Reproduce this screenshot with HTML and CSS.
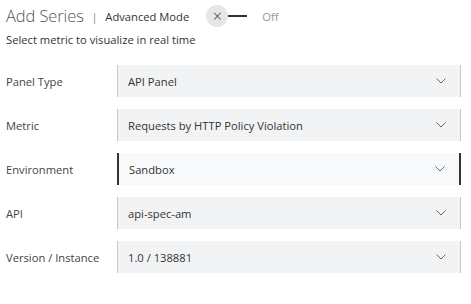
FILE: index.html
```html
<!DOCTYPE html>
<html lang="en">
<head>
  <meta charset="UTF-8">
  <title>Add Series</title>
  <link rel="stylesheet" href="styles.css">
</head>
<body>
  <div class="panel">
    <div class="header">
      <h1 class="title">Add Series</h1>
      <span class="divider">|</span>
      <span class="mode-label">Advanced Mode</span>
      <div class="toggle">
        <span class="toggle-knob">&times;</span>
        <span class="toggle-track"></span>
      </div>
      <span class="toggle-state">Off</span>
    </div>
    <p class="subtitle">Select metric to visualize in real time</p>

    <div class="form">
      <label class="field-label">Panel Type</label>
      <div class="select">
        <span class="select-value">API Panel</span>
        <svg class="chevron" viewBox="0 0 10 6"><path d="M0.5 0.5 L5 5 L9.5 0.5" /></svg>
      </div>

      <label class="field-label">Metric</label>
      <div class="select">
        <span class="select-value">Requests by HTTP Policy Violation</span>
        <svg class="chevron" viewBox="0 0 10 6"><path d="M0.5 0.5 L5 5 L9.5 0.5" /></svg>
      </div>

      <label class="field-label">Environment</label>
      <div class="select select-active">
        <span class="select-value">Sandbox</span>
        <svg class="chevron" viewBox="0 0 10 6"><path d="M0.5 0.5 L5 5 L9.5 0.5" /></svg>
      </div>

      <label class="field-label">API</label>
      <div class="select">
        <span class="select-value">api-spec-am</span>
        <svg class="chevron" viewBox="0 0 10 6"><path d="M0.5 0.5 L5 5 L9.5 0.5" /></svg>
      </div>

      <label class="field-label">Version / Instance</label>
      <div class="select">
        <span class="select-value">1.0 / 138881</span>
        <svg class="chevron" viewBox="0 0 10 6"><path d="M0.5 0.5 L5 5 L9.5 0.5" /></svg>
      </div>
    </div>
  </div>
</body>
</html>
```

FILE: styles.css
```css
* {
  box-sizing: border-box;
  margin: 0;
  padding: 0;
}

body {
  background: #ffffff;
  font-family: 'Open Sans', 'Liberation Sans', sans-serif;
  color: #333;
}

.panel {
  padding: 4px 6px;
}

.header {
  display: flex;
  align-items: center;
  height: 23px;
}

.title {
  font-size: 16.5px;
  font-weight: 300;
  color: #555;
  letter-spacing: -0.1px;
}

.divider {
  font-size: 10px;
  color: #777;
  margin: 2px 8px 0 8px;
}

.mode-label {
  font-size: 11.2px;
  color: #333;
  margin-top: 2px;
}

.toggle {
  display: flex;
  align-items: center;
  margin-left: 17px;
}

.toggle-knob {
  width: 22px;
  height: 22px;
  border-radius: 50%;
  background: #e6e6e6;
  display: flex;
  align-items: center;
  justify-content: center;
  font-size: 16px;
  font-weight: 300;
  color: #333;
  line-height: 1;
}

.toggle-track {
  width: 19px;
  height: 2px;
  background: #333;
}

.toggle-state {
  font-size: 11.2px;
  color: #999;
  margin-left: 15px;
  margin-top: 2px;
}

.subtitle {
  font-size: 11.2px;
  color: #333;
  margin-top: 5px;
}

.form {
  display: grid;
  grid-template-columns: 111px 344px;
  row-gap: 12px;
  align-items: center;
  margin-top: 18px;
}

.field-label {
  font-size: 11.2px;
  color: #444;
}

.select {
  height: 32px;
  display: flex;
  align-items: center;
  justify-content: space-between;
  background: #f2f3f5;
  border-left: 1px solid #c8c8c8;
  border-right: 1px solid #c8c8c8;
  padding: 0 14px 0 10px;
}

.select-active {
  background: #f8f9fa;
  border-left: 2px solid #333;
  border-right: 2px solid #333;
}

.select-value {
  font-size: 11.2px;
  color: #333;
}

.chevron {
  width: 10px;
  height: 6px;
  fill: none;
  stroke: #666;
  stroke-width: 1;
}
```
